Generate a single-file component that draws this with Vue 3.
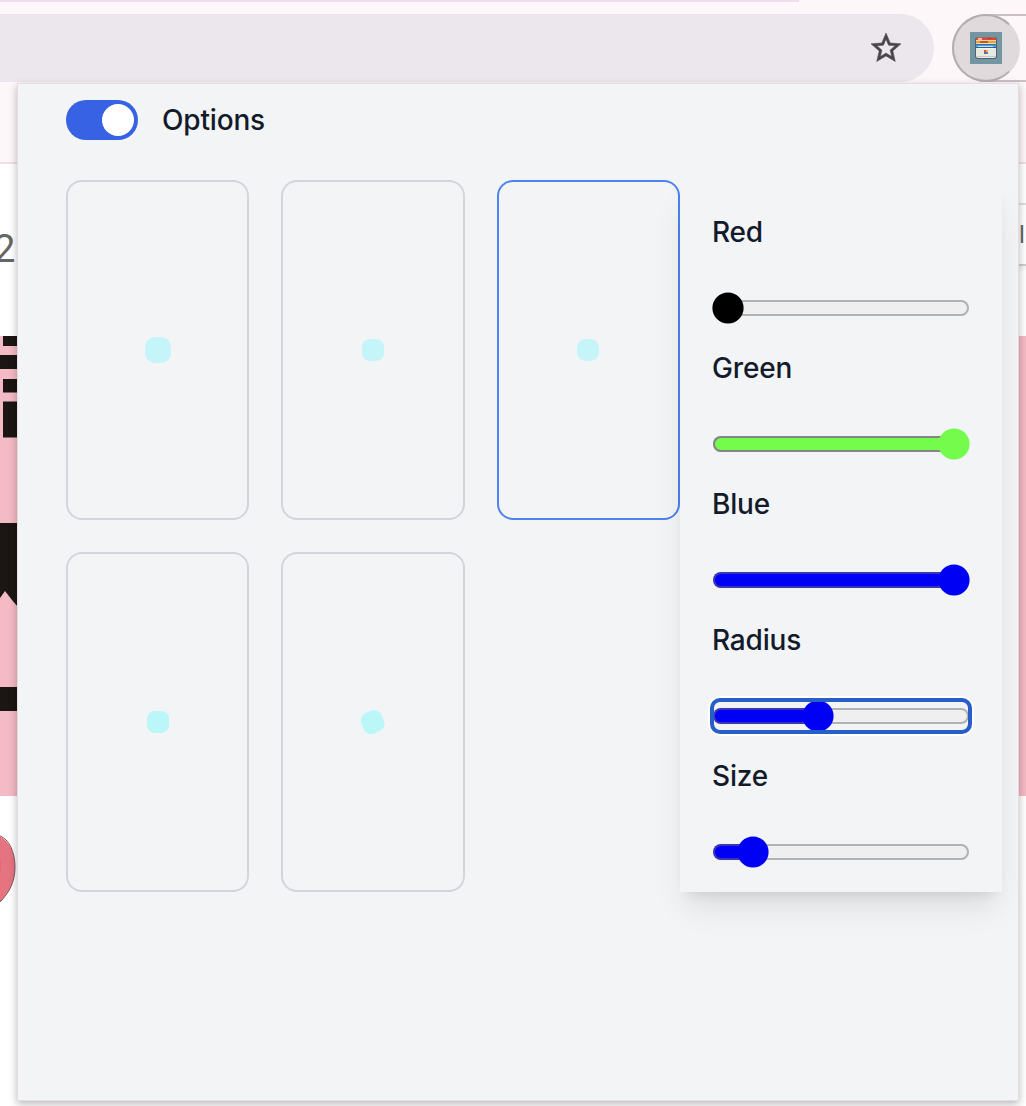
<script setup>
import { ref } from 'vue'

const enabled = ref(true)
const selected = ref(2)
const shapes = [
  { size: 26, radius: 10, opacity: 0.75, turn: 0 },
  { size: 22, radius: 8, opacity: 0.75, turn: 0 },
  { size: 22, radius: 8.5, opacity: 0.75, turn: 0 },
  { size: 22, radius: 8, opacity: 1, turn: 0 },
  { size: 21.5, radius: 8, opacity: 1, turn: 67 },
]
const sliders = [
  { label: 'Red', value: 0, color: '#000', edge: '#000' },
  { label: 'Green', value: 226, color: '#75fb4c', edge: '#858585' },
  { label: 'Blue', value: 226, color: '#0000f5', edge: '#3a35b5' },
  { label: 'Radius', value: 90, color: '#0000f5', edge: '#3a35b5', focused: true },
  { label: 'Size', value: 25, color: '#0000f5', edge: '#3a35b5' },
]
</script>

<template>
  <div class="browser">
    <div class="tabline"></div>
    <div class="toolbar">
      <div class="address">
        <svg class="star" width="36" height="36" viewBox="0 0 24 24">
          <path d="M22 9.24l-7.19-.62L12 2 9.19 8.63 2 9.24l5.46 4.73L5.82 21 12 17.27 18.18 21l-1.63-7.03L22 9.24zM12 15.4l-3.76 2.27 1-4.28-3.32-2.88 4.38-.38L12 6.1l1.71 4.04 4.38.38-3.32 2.88 1 4.28L12 15.4z" />
        </svg>
      </div>
      <div class="extensions">
        <div class="extension">
          <svg width="32" height="32" viewBox="0 0 32 32">
            <rect width="32" height="32" fill="#7397a2" />
            <rect x="5" y="5" width="22" height="22" rx="3" fill="#4f5f76" />
            <rect x="7" y="5" width="18" height="1" fill="#b8605b" />
            <rect x="6" y="6" width="20" height="2" fill="#d9483b" />
            <rect x="8" y="6" width="4" height="2" fill="#efc0a0" />
            <rect x="18" y="6" width="3" height="1" fill="#b52c36" />
            <rect x="6" y="8" width="20" height="1" fill="#f3d9a0" />
            <rect x="6" y="9" width="20" height="2" fill="#e9a13b" />
            <rect x="10" y="9" width="8" height="2" fill="#c9523a" />
            <rect x="6" y="11" width="20" height="1" fill="#f5dc94" />
            <rect x="6" y="12" width="20" height="1" fill="#356eaf" />
            <rect x="6" y="13" width="20" height="2" fill="#4b9ed9" />
            <rect x="8" y="14" width="15" height="1" fill="#b9e5f5" />
            <rect x="6" y="15" width="20" height="2" fill="#315d99" />
            <path d="M6 16h2l1 1h14l1-1h2v8q0 2-2 2H8q-2 0-2-2z" fill="#e8e9df" />
            <rect x="8" y="16" width="16" height="1" fill="#f8f7ee" />
            <rect x="7" y="24" width="18" height="1" fill="#c6cac3" />
            <rect x="14" y="18" width="2" height="2" fill="#e44939" />
            <rect x="16" y="18" width="2" height="2" fill="#edb43a" />
            <rect x="14" y="20" width="2" height="2" fill="#8c4eb1" />
            <rect x="16" y="20" width="2" height="2" fill="#348bd1" />
          </svg>
        </div>
      </div>
    </div>

    <div class="page">
      <div class="header">
        <span class="count">2</span>
        <span class="login">l</span>
      </div>
      <div class="hero">
        <svg width="18" height="460" viewBox="0 0 18 460" fill="#1b1614">
          <path d="M3 0h15v10H3zM0 19h18v14H0zM3 43h15v13.5H3zM3 65.500h15V101.500H3zM0 187h18v84l-6-7-7-9-5 7zM0 351h18v24H0z" />
        </svg>
      </div>
      <svg class="heart" width="18" height="110" viewBox="0 0 18 110">
        <path d="M-8 39C6 38 15 54 15 71C15 86 9 98-4 110Z" fill="#e57380" />
        <path d="M0 40C9 43 15 56 15 71C15 86 9 97 0 106" fill="none" stroke="#84535a" stroke-width="1" />
        <ellipse cx="-3" cy="70" rx="3.500" ry="17" fill="#cc6370" />
      </svg>
    </div>

    <main class="popup">
      <header class="options">
        <button class="toggle" :class="{ on: enabled }" @click="enabled = !enabled"><i></i></button>
        <span class="label title">Options</span>
      </header>
      <div class="content">
        <div class="cards">
          <div
            v-for="(s, i) in shapes"
            :key="i"
            class="card"
            :class="{ selected: selected === i }"
            @click="selected = i"
          >
            <div
              class="shape"
              :style="{ width: s.size + 'px', height: s.size + 'px', borderRadius: s.radius + 'px', background: s.opacity === 1 ? '#bbf7f9' : '#c6f5f9', transform: `rotate(${s.turn}deg)` }"
            ></div>
          </div>
        </div>
        <aside class="panel">
          <div v-for="s in sliders" :key="s.label" class="control">
            <span class="label">{{ s.label }}</span>
            <div class="slider" :class="{ focused: s.focused }">
              <div class="track">
                <div class="fill" :style="{ width: s.value + 14 + 'px', background: s.color, borderColor: s.edge }"></div>
              </div>
              <svg class="thumb" viewBox="0 0 32 32" :style="{ left: s.value + 'px', fill: s.color }">
                <circle cx="16" cy="16" r="15.6" />
              </svg>
            </div>
          </div>
        </aside>
      </div>
    </main>
  </div>
</template>

<style>
body {
  margin: 0;
  overflow: hidden;
}
</style>

<style scoped>
* {
  box-sizing: border-box;
}
.browser {
  position: relative;
  width: 1026px;
  height: 1106px;
  overflow: hidden;
  background: #fff;
  font-family: Inter, 'Liberation Sans', sans-serif;
}
.tabline {
  height: 14px;
  background: linear-gradient(#f2dcef, #f2dcef) 0 0 / 799px 2px no-repeat #fdf7f9;
}
.toolbar {
  display: flex;
  gap: 18px;
  height: 150px;
  background: #fdf7f9;
  border-bottom: 2px solid #f1dfe6;
}
.address {
  display: flex;
  flex: none;
  align-items: center;
  justify-content: flex-end;
  width: 934px;
  height: 68px;
  padding-right: 30px;
  border-radius: 0 34px 34px 0;
  background: #ece6ed;
}
.star {
  fill: #4a454b;
  stroke: #4a454b;
  stroke-width: 0.35;
}
.extensions {
  flex: none;
  width: 120px;
  height: 68px;
  border: 2px solid #cbc1c5;
  border-radius: 34px;
}
.extension {
  display: flex;
  align-items: center;
  justify-content: center;
  width: 68px;
  height: 68px;
  margin: -2px;
  border: 2px solid #b3adaf;
  border-right-color: #e0dadc;
  border-radius: 50%;
  background: #e0dadc;
}
.header {
  display: flex;
  justify-content: space-between;
  height: 172px;
  color: #666;
}
.count {
  margin: 63px 0 0 -6px;
  font: 38px/44px Roboto, sans-serif;
}
.login {
  width: 8px;
  height: 63px;
  margin-top: 39px;
  padding-left: 1px;
  border-top: 2px solid #dedede;
  border-bottom: 2px solid #cfcfcf;
  box-shadow: 0 3px 4px #eee;
  font: 24px/60px Roboto, sans-serif;
}
.hero {
  height: 460px;
  background: #f4bac5;
}
.hero svg,
.heart {
  display: block;
}
.popup {
  position: absolute;
  top: 83px;
  left: 17px;
  width: 1002px;
  height: 1018px;
  padding: 16px 16px 0 48px;
  border: 1px solid #e7dce1;
  background: #f2f4f6;
  box-shadow: 0 3px 8px rgba(0, 0, 0, 0.28);
}
.options {
  display: flex;
  align-items: center;
  gap: 24px;
  height: 40px;
}
.toggle {
  display: flex;
  width: 72px;
  height: 40px;
  padding: 4px;
  border: 0;
  border-radius: 20px;
  background: #d1d5db;
}
.toggle.on {
  justify-content: flex-end;
  background: #3662e3;
}
.toggle i {
  width: 32px;
  height: 32px;
  border-radius: 50%;
  background: #fff;
}
.label {
  display: block;
  color: #131a29;
  font-size: 28px;
  font-weight: 500;
  line-height: 40px;
  letter-spacing: -0.17px;
}
.content {
  display: flex;
  margin-top: 40px;
}
.cards {
  display: grid;
  grid-template-columns: repeat(3, 1fr);
  grid-auto-rows: 340px;
  gap: 32px;
  width: 614px;
}
.card {
  display: flex;
  align-items: center;
  justify-content: center;
  border: 2px solid #d2d5db;
  border-radius: 16px;
}
.card.selected {
  border-color: #4c83ee;
}
.panel {
  width: 322px;
  height: 712px;
  padding: 32px 32px 0;
  background: #f2f4f6;
  box-shadow: 0 20px 30px -6px rgba(0, 0, 0, 0.1), 0 8px 12px -8px rgba(0, 0, 0, 0.12);
}
.control {
  height: 136px;
}
.slider {
  position: relative;
  display: flex;
  align-items: center;
  width: 258px;
  height: 32px;
  margin-top: 40px;
}
.track {
  width: 256px;
  height: 16px;
  margin-left: 1px;
  border-radius: 8px;
  background: #efefef;
  box-shadow: inset 0 0 0 2px #b2b2b2;
}
.fill {
  height: 16px;
  border: 2px solid;
  border-right: 0;
  border-radius: 8px 0 0 8px;
}
.thumb {
  position: absolute;
  top: 0;
  width: 32px;
  height: 32px;
}
.focused::after {
  content: '';
  position: absolute;
  inset: -2px;
  border: 4px solid #275ec8;
  border-radius: 10px;
  box-shadow: 0 0 0 2px #fff;
}
</style>
